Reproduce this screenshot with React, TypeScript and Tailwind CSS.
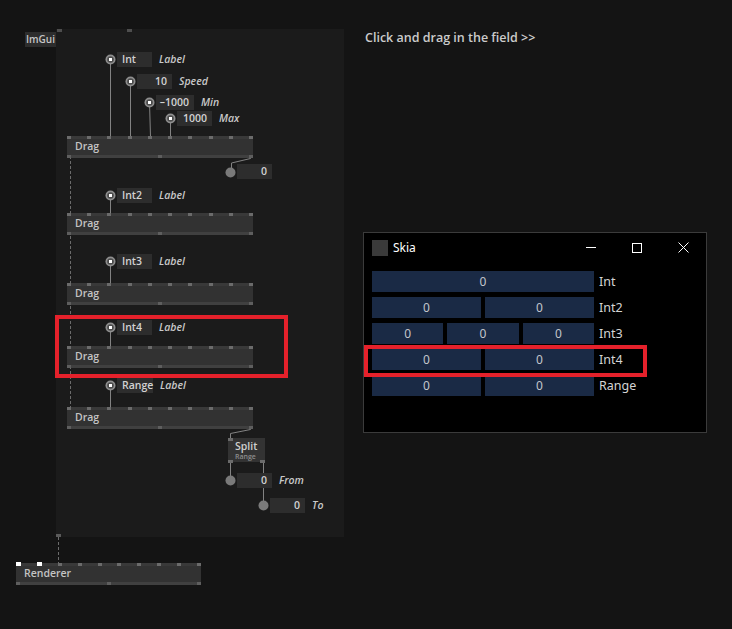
import React from 'react';

const patchFont = "font-['Open_Sans',sans-serif]";
const winFont = "font-['Noto_Sans',sans-serif]";

// a row of tiny pin squares, spread over the node edge
function PinRow({ count, strip, pin, highlight = 0 }: { count: number; strip: string; pin: string; highlight?: number }) {
  return (
    <div className={`flex h-[3px] justify-between ${strip}`}>
      {Array.from({ length: count }).map((_, i) => (
        <div key={i} className={i < highlight ? 'h-[4px] w-[5px] -translate-y-[1px] bg-white' : `h-[3px] w-[4px] ${pin}`} />
      ))}
    </div>
  );
}

function Node({ pos, label, topPins = 10, highlight = 0 }: { pos: string; label: string; topPins?: number; highlight?: number }) {
  return (
    <div className={`absolute flex h-[20px] flex-col ${pos}`}>
      <PinRow count={topPins} strip="bg-[#393939]" pin="bg-[#6b6b6b]" highlight={highlight} />
      <div className={`flex flex-1 items-center bg-[#323232] pl-[8px] text-[10.5px] font-semibold text-[#c4c4c4] ${patchFont}`}>
        {label}
      </div>
      <PinRow count={3} strip="bg-[#404040]" pin="bg-[#5e5e5e]" />
    </div>
  );
}

function IOBox({ pos, text, label, right, w }: { pos: string; text: string; label?: string; right?: boolean; w: string }) {
  return (
    <div className={`absolute flex items-center gap-[7px] whitespace-nowrap ${pos} ${patchFont}`}>
      <div
        className={`flex h-[15px] items-center bg-[#2d2d2d] px-[5px] text-[10.5px] font-semibold text-[#d2d2d2] ${w} ${
          right ? 'justify-end' : 'justify-start'
        }`}
      >
        {text}
      </div>
      {label && <span className="text-[10.5px] font-semibold italic text-[#c9c9c9]">{label}</span>}
    </div>
  );
}

const ringPins: [number, number][] = [
  [110, 59],
  [130, 81],
  [149, 102],
  [170, 118],
  [110, 195],
  [110, 261],
  [110, 327],
  [110, 385],
];

const outPins: [number, number][] = [
  [230, 172],
  [230, 480],
  [263, 505],
];

function Links() {
  return (
    <svg className="pointer-events-none absolute inset-0" width="732" height="629" viewBox="0 0 732 629">
      <g stroke="#6c6c6c" strokeWidth="1" strokeDasharray="3 2" fill="none">
        <line x1="70.5" y1="156" x2="70.5" y2="407" />
        <line x1="58.5" y1="537" x2="58.5" y2="563" />
      </g>
      <g stroke="#828282" strokeWidth="1" fill="none">
        <line x1="110.5" y1="59" x2="110.5" y2="137" />
        <line x1="130.5" y1="81" x2="130.5" y2="137" />
        <line x1="149.5" y1="102" x2="150.5" y2="137" />
        <line x1="170.5" y1="118" x2="170.5" y2="137" />
        <path d="M250.5 156 L250.5 158.5 L231.5 163 L231.5 172" />
        <line x1="110.5" y1="195" x2="110.5" y2="214" />
        <line x1="110.5" y1="261" x2="110.5" y2="284" />
        <line x1="110.5" y1="327" x2="110.5" y2="347" />
        <line x1="110.5" y1="385" x2="110.5" y2="408" />
        <path d="M250.5 427 L250.5 429.5 L230.5 433.5 L230.5 439" />
        <line x1="230.5" y1="462" x2="230.5" y2="480" />
        <line x1="263.5" y1="462" x2="263.5" y2="505" />
      </g>
      {ringPins.map(([x, y]) => (
        <g key={`${x}-${y}`}>
          <circle cx={x + 0.5} cy={y + 0.5} r="5" fill="#8f8f8f" />
          <circle cx={x + 0.5} cy={y + 0.5} r="3.3" fill="#4d4d4d" />
          <rect x={x - 1} y={y - 1} width="3" height="3" fill="#ffffff" />
        </g>
      ))}
      {outPins.map(([x, y]) => (
        <circle key={`${x}-${y}`} cx={x + 0.5} cy={y + 0.5} r="5" fill="#7a7a7a" />
      ))}
    </svg>
  );
}

function SkiaWindow() {
  const rows: { label: string; cells: number }[] = [
    { label: 'Int', cells: 1 },
    { label: 'Int2', cells: 2 },
    { label: 'Int3', cells: 3 },
    { label: 'Int4', cells: 2 },
    { label: 'Range', cells: 2 },
  ];
  return (
    <div className={`absolute left-[363px] top-[232px] flex h-[201px] w-[344px] flex-col border border-[#3b3b3b] bg-black ${winFont}`}>
      <div className="flex h-[29px] items-center pl-[8px]">
        <div className="h-[16px] w-[16px] bg-[#3a3a3a]" />
        <span className="ml-[5px] text-[12px] text-white">Skia</span>
        <div className="ml-auto flex h-full">
          <div className="flex w-[46px] items-center justify-center">
            <div className="h-px w-[10px] bg-white" />
          </div>
          <div className="flex w-[46px] items-center justify-center">
            <div className="h-[10px] w-[10px] border border-white" />
          </div>
          <div className="flex w-[46px] items-center justify-center">
            <svg width="11" height="11" viewBox="0 0 11 11">
              <path d="M0.5 0.5 L10.5 10.5 M10.5 0.5 L0.5 10.5" stroke="#ffffff" strokeWidth="1" />
            </svg>
          </div>
        </div>
      </div>
      <div className="flex flex-col gap-[5px] pl-[8px] pt-[9px]">
        {rows.map((r) => (
          <div key={r.label} className="flex h-[21px] items-center">
            <div className="flex h-full w-[222px] gap-[4px]">
              {Array.from({ length: r.cells }).map((_, i) => (
                <div key={i} className="flex flex-1 items-center justify-center bg-[#1a2a45] text-[12px] text-[#c3c6cc]">
                  0
                </div>
              ))}
            </div>
            <span className="ml-[5px] mt-[2px] text-[12.5px] text-[#d4d4d4]">{r.label}</span>
          </div>
        ))}
      </div>
    </div>
  );
}

export default function App() {
  return (
    <div className="relative h-[629px] w-[732px] overflow-hidden bg-[#141414]">
      {/* ImGui region */}
      <div className="absolute left-[56px] top-[29px] h-[508px] w-[288px] bg-[#1b1b1b]" />
      <div className="absolute left-[57px] top-[29px] h-[3px] w-[5px] bg-[#4e4e4e]" />
      <div className="absolute left-[127px] top-[29px] h-[3px] w-[5px] bg-[#4e4e4e]" />
      <div className="absolute left-[56px] top-[534px] h-[3px] w-[5px] bg-[#5a5a5a]" />
      <div className={`absolute left-[25px] top-[32px] flex h-[15px] w-[31px] items-center justify-center bg-[#2d2d2d] text-[10px] font-semibold text-[#c6c6c6] ${patchFont}`}>
        ImGui
      </div>

      <Links />

      <IOBox pos="left-[117px] top-[52px]" w="w-[35px]" text="Int" label="Label" />
      <IOBox pos="left-[137px] top-[74px]" w="w-[35px]" text="10" label="Speed" right />
      <IOBox pos="left-[156px] top-[95px]" w="w-[38px]" text="–1000" label="Min" right />
      <IOBox pos="left-[177px] top-[111px]" w="w-[35px]" text="1000" label="Max" right />
      <Node pos="left-[67px] top-[136px] w-[186px]" label="Drag" />
      <IOBox pos="left-[237px] top-[164px]" w="w-[35px]" text="0" right />

      <IOBox pos="left-[117px] top-[188px]" w="w-[35px]" text="Int2" label="Label" />
      <Node pos="left-[67px] top-[213px] w-[186px]" label="Drag" />

      <IOBox pos="left-[117px] top-[254px]" w="w-[35px]" text="Int3" label="Label" />
      <Node pos="left-[67px] top-[283px] w-[186px]" label="Drag" />

      <IOBox pos="left-[117px] top-[320px]" w="w-[35px]" text="Int4" label="Label" />
      <Node pos="left-[67px] top-[346px] w-[186px]" label="Drag" />

      <IOBox pos="left-[117px] top-[378px]" w="w-[36px]" text="Range" label="Label" />
      <Node pos="left-[67px] top-[407px] w-[186px]" label="Drag" />

      {/* Split node */}
      <div className={`absolute left-[228px] top-[438px] flex h-[24px] w-[37px] flex-col bg-[#333333] ${patchFont}`}>
        <div className="flex h-[3px] justify-start">
          <div className="h-[3px] w-[5px] bg-[#6b6b6b]" />
        </div>
        <div className="flex flex-1 flex-col pl-[7px] leading-none">
          <span className="text-[10.5px] font-semibold text-[#cfcfcf]">Split</span>
          <span className="mt-[1px] text-[7px] font-semibold text-[#8c8c8c]">Range</span>
        </div>
        <div className="flex h-[3px] justify-between">
          <div className="h-[3px] w-[5px] bg-[#6b6b6b]" />
          <div className="h-[3px] w-[5px] bg-[#6b6b6b]" />
        </div>
      </div>
      <IOBox pos="left-[237px] top-[473px]" w="w-[35px]" text="0" label="From" right />
      <IOBox pos="left-[270px] top-[498px]" w="w-[35px]" text="0" label="To" right />

      <Node pos="left-[16px] top-[563px] w-[185px]" label="Renderer" highlight={2} />

      <div className={`absolute left-[365px] top-[29px] whitespace-nowrap text-[12.5px] font-semibold text-[#cbcbcb] ${patchFont}`}>
        Click and drag in the field &gt;&gt;
      </div>

      <SkiaWindow />

      {/* highlight frames */}
      <div className="absolute left-[55px] top-[315px] h-[63px] w-[233px] border-4 border-[#e5212b]" />
      <div className="absolute left-[364px] top-[345px] h-[32px] w-[283px] border-4 border-[#e5212b]" />
    </div>
  );
}
